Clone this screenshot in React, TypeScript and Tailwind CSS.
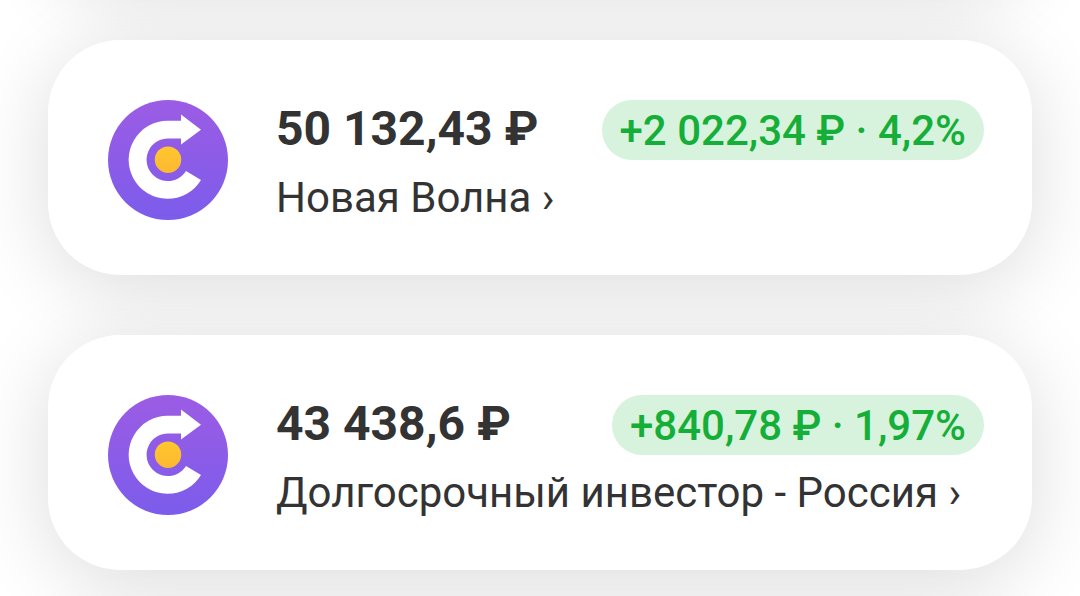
interface Strategy {
  id: string;
  name: string;
  balance: string;
  profit: string;
}

const STRATEGIES: Strategy[] = [
  { id: "new-wave",  name: "Новая Волна",                   balance: "50 132,43 ₽", profit: "+2 022,34 ₽ · 4,2%" },
  { id: "long-term", name: "Долгосрочный инвестор - Россия", balance: "43 438,6 ₽",  profit: "+840,78 ₽ · 1,97%" },
];

const CARD = "shrink-0 rounded-[72px] bg-white shadow-[0_12px_80px_rgba(0,0,0,0.14)]";

export default function App() {
  return (
    <main className="h-screen overflow-hidden bg-white px-12 font-['Roboto','Noto_Sans',sans-serif] text-[#333333]">
      <div className="flex flex-col gap-15">
        {/* Neighbour card, scrolled above the top edge */}
        <div className={`${CARD} -mt-[255px] h-[235px]`} />

        {STRATEGIES.map(strategy => (
          <StrategyCard key={strategy.id} strategy={strategy} />
        ))}

        {/* Neighbour card below the fold */}
        <div className={`${CARD} h-[235px]`} />
      </div>
    </main>
  );
}

function StrategyCard({ strategy }: { strategy: Strategy }) {
  return (
    <a href={`#${strategy.id}`} className={`${CARD} flex items-start gap-12 pt-15 pr-12 pb-[47px] pl-15`}>
      <StrategyLogo id={strategy.id} />
      <div className="min-w-0 flex-1">
        <div className="flex items-start justify-between gap-6">
          <span className="text-[48px] leading-[58px] font-bold whitespace-nowrap">{strategy.balance}</span>
          <span className="rounded-full bg-[#d7f3dd] px-[18px] pt-0.5 text-[42px] leading-[58px] font-medium whitespace-nowrap text-[#14ae38]">
            {strategy.profit}
          </span>
        </div>
        <p className="mt-2 text-[42px] leading-[60px] whitespace-nowrap">{strategy.name} ›</p>
      </div>
    </a>
  );
}

function StrategyLogo({ id }: { id: string }) {
  return (
    <svg viewBox="0 0 120 120" className="size-30 shrink-0" aria-hidden="true">
      <defs>
        <linearGradient id={`${id}-bg`} x1="0" y1="0" x2="0" y2="1">
          <stop offset="0" stopColor="#9c5ce4" />
          <stop offset="1" stopColor="#7c5ceb" />
        </linearGradient>
        <linearGradient id={`${id}-dot`} x1="0" y1="0" x2="0" y2="1">
          <stop offset="0" stopColor="#ffc62e" />
          <stop offset="1" stopColor="#fdb931" />
        </linearGradient>
      </defs>
      <circle cx="60" cy="60" r="60" fill={`url(#${id}-bg)`} />
      <path
        fill="#fff"
        d="M73 14.5 93 29.7 73 44.5V38.5H60A21.3 21.3 0 1 0 78 71L93 80A39 39 0 1 1 60 20.8H73Z"
      />
      <circle cx="60" cy="59.7" r="13.2" fill={`url(#${id}-dot)`} />
    </svg>
  );
}
